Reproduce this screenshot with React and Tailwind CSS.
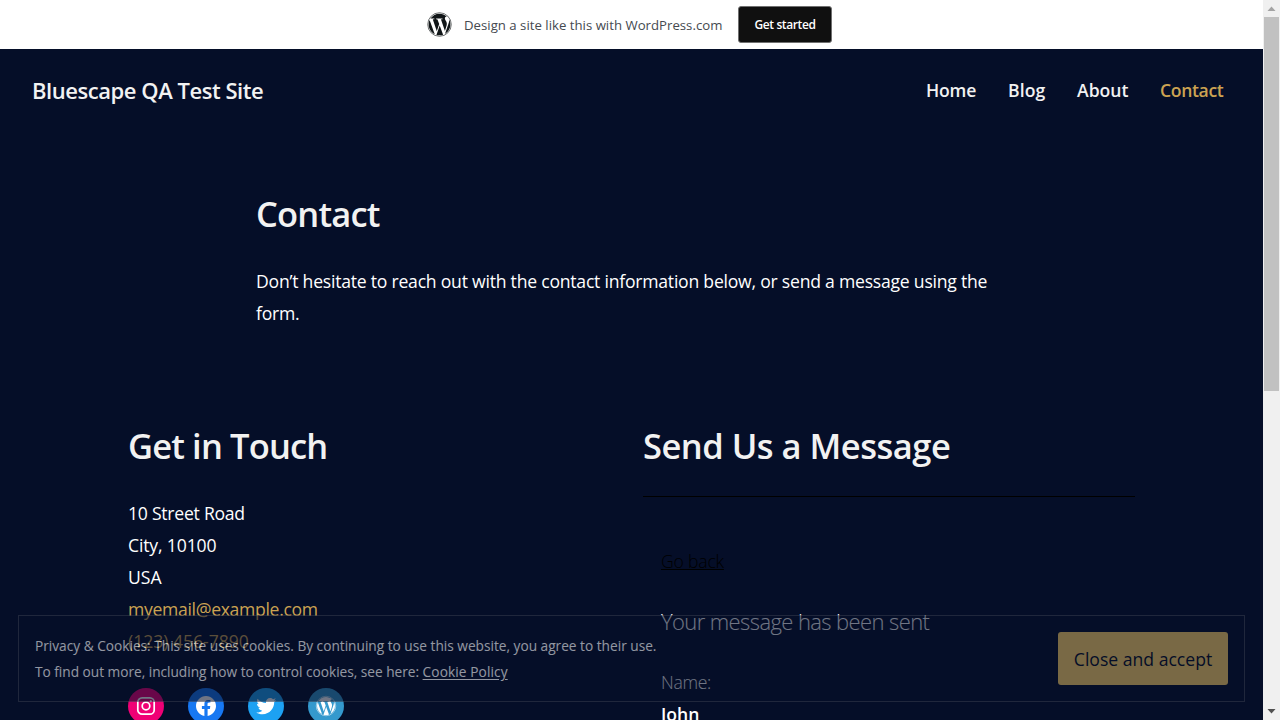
import React from "react";

function WordPressGlyph({ className }) {
  return (
    <svg viewBox="0 0 24 24" className={className} fill="currentColor">
      <path d="M12.158,12.786L9.46,20.625c0.806,0.237,1.657,0.366,2.54,0.366c1.047,0,2.051-0.181,2.986-0.51c-0.024-0.038-0.046-0.079-0.065-0.124L12.158,12.786z M3.009,12c0,3.559,2.068,6.634,5.067,8.092L3.788,8.341C3.289,9.459,3.009,10.696,3.009,12z M18.069,11.546c0-1.112-0.399-1.881-0.741-2.48c-0.456-0.741-0.883-1.368-0.883-2.109c0-0.826,0.627-1.596,1.51-1.596c0.04,0,0.078,0.005,0.116,0.007C16.472,3.904,14.34,3.009,12,3.009c-3.141,0-5.904,1.612-7.512,4.052c0.211,0.007,0.41,0.011,0.579,0.011c0.94,0,2.396-0.114,2.396-0.114C7.947,6.93,8.004,7.642,7.52,7.699c0,0-0.487,0.057-1.029,0.085l3.274,9.739l1.968-5.901l-1.401-3.838C9.848,7.756,9.389,7.699,9.389,7.699C8.904,7.67,8.961,6.93,9.446,6.958c0,0,1.484,0.114,2.368,0.114c0.94,0,2.397-0.114,2.397-0.114c0.485-0.028,0.542,0.684,0.057,0.741c0,0-0.488,0.057-1.029,0.085l3.249,9.665l0.897-2.996C17.841,13.284,18.069,12.316,18.069,11.546z M19.889,7.686c0.039,0.286,0.06,0.593,0.06,0.924c0,0.912-0.171,1.938-0.684,3.22l-2.746,7.94c2.673-1.558,4.47-4.454,4.47-7.771C20.991,10.436,20.591,8.967,19.889,7.686z" />
      <circle cx="12" cy="12" r="9.75" fill="none" stroke="currentColor" strokeWidth="0.5" />
    </svg>
  );
}

function InstagramGlyph({ className }) {
  return (
    <svg viewBox="0 0 24 24" className={className} fill="none" stroke="currentColor">
      <rect x="3.8" y="3.8" width="16.4" height="16.4" rx="4.3" strokeWidth="1.7" />
      <circle cx="12" cy="12" r="3.8" strokeWidth="1.7" />
      <circle cx="16.8" cy="7.2" r="1.1" fill="currentColor" stroke="none" />
    </svg>
  );
}

function FacebookGlyph({ className }) {
  return (
    <svg viewBox="0 0 24 24" className={className} fill="currentColor">
      <path d="M12 2C6.5 2 2 6.5 2 12c0 5 3.7 9.1 8.4 9.9v-7H7.9V12h2.5V9.8c0-2.5 1.5-3.9 3.8-3.9 1.1 0 2.2.2 2.2.2v2.5h-1.3c-1.2 0-1.6.8-1.6 1.6V12h2.8l-.4 2.9h-2.3v7C18.3 21.1 22 17 22 12c0-5.5-4.5-10-10-10z" />
    </svg>
  );
}

function TwitterGlyph({ className }) {
  return (
    <svg viewBox="0 0 24 24" className={className} fill="currentColor">
      <path d="M22.23,5.924c-0.736,0.326-1.527,0.547-2.357,0.646c0.847-0.508,1.498-1.312,1.804-2.27c-0.793,0.47-1.671,0.812-2.606,0.996C18.324,4.498,17.257,4,16.077,4c-2.266,0-4.103,1.837-4.103,4.103c0,0.322,0.036,0.635,0.106,0.935C8.67,8.867,5.647,7.234,3.623,4.751C3.27,5.357,3.067,6.062,3.067,6.814c0,1.424,0.724,2.679,1.825,3.415c-0.673-0.021-1.305-0.206-1.859-0.513c0,0.017,0,0.034,0,0.052c0,1.988,1.414,3.647,3.292,4.023c-0.344,0.094-0.707,0.144-1.081,0.144c-0.264,0-0.521-0.026-0.772-0.074c0.522,1.63,2.038,2.816,3.833,2.85c-1.404,1.1-3.174,1.756-5.096,1.756c-0.331,0-0.658-0.019-0.979-0.057c1.816,1.164,3.973,1.843,6.29,1.843c7.547,0,11.675-6.252,11.675-11.675c0-0.178-0.004-0.355-0.012-0.531C20.985,7.47,21.68,6.747,22.23,5.924z" />
    </svg>
  );
}

function MarketingBar() {
  return (
    <div className="flex h-[49px] items-center bg-white pl-[425px]">
      <WordPressGlyph className="size-[29px] shrink-0 text-[#101517]" />
      <span className="ml-[10px] mt-px w-[274px] whitespace-nowrap text-[13.2px] tracking-[0.01px] text-[#454a50]">
        Design a site like this with WordPress.com
      </span>
      <button className="mb-px h-[37px] w-[94px] rounded-[3px] border border-[#707070] bg-[#101010] text-[12px] font-semibold leading-none tracking-[-0.39px] text-white">
        <span className="relative top-px">Get started</span>
      </button>
    </div>
  );
}

function Header() {
  return (
    <header className="flex h-[83px] items-center justify-between pb-px pl-8 pr-[39px]">
      <a className="-mt-px whitespace-nowrap text-[22px] font-semibold tracking-[-0.45px] text-[#f2f2f2]">Bluescape QA Test Site</a>
      <nav className="-mt-px flex whitespace-nowrap text-[17.6px] font-semibold text-[#f2f2f2]">
        <a className="w-[82px] tracking-[-0.2px]">Home</a>
        <a className="w-[69px] tracking-[0.1px]">Blog</a>
        <a className="w-[83px]">About</a>
        <a className="w-[64px] tracking-[-0.35px] text-[#cca352]">Contact</a>
      </nav>
    </header>
  );
}

function Social({ color, children }) {
  return <a className={"flex size-9 items-center justify-center rounded-full text-white " + color}>{children}</a>;
}

function CookieBanner() {
  return (
    <div className="absolute left-[18px] top-[615px] flex h-[87px] w-[1227px] items-center justify-between border border-[#363b4c] bg-[#050e28] pl-4 pr-4 opacity-[0.57]">
      <p className="whitespace-nowrap text-[13.7px] leading-[26px] text-white">
        <span className="tracking-[-0.005px]">Privacy &amp; Cookies: This site uses cookies. By continuing to use this website, you agree to their use.</span>
        <br />
        <span className="tracking-[-0.02px]">To find out more, including how to control cookies, see here: </span>
        <a className="tracking-[0.1px] underline underline-offset-2">Cookie Policy</a>
      </p>
      <button className="h-[53px] w-[170px] rounded-[3px] bg-[#d2af5b] text-[17.6px] text-[#050e28]">Close and accept</button>
    </div>
  );
}

function Scrollbar() {
  return (
    <div className="flex h-full w-[17px] flex-col items-start bg-[#f0f0f0]">
      <svg viewBox="0 0 17 17" className="h-[17px] w-[17px]">
        <path d="M8.5 6.5l4 4.5h-8z" fill="#a3a3a3" />
      </svg>
      <div className="ml-px h-[374px] w-[15px] bg-[#c1c1c1]" />
      <svg viewBox="0 0 17 17" className="mt-auto h-[17px] w-[17px]">
        <path d="M8.5 10.5l4-4.5h-8z" fill="#505050" />
      </svg>
    </div>
  );
}

export default function App() {
  return (
    <div className="relative flex h-[720px] w-[1280px] overflow-hidden bg-[#050e28] font-['Open_Sans',sans-serif] text-[17.6px] leading-8 text-white">
      <div className="h-[720px] w-[1263px] overflow-hidden">
        <MarketingBar />
        <Header />
        <section className="h-[288px] pl-64 pt-[52px]">
          <h1 className="text-[34.5px] font-semibold leading-[60px] tracking-[-0.8px] text-[#f2f2f2]">Contact</h1>
          <p className="mt-[21px] w-[752px] tracking-[-0.23px]">
            Don’t hesitate to reach out with the contact information below, or send a message using the
            <br />
            form.
          </p>
        </section>
        <div className="flex pl-32">
          <section className="w-[515px]">
            <h2 className="text-[34.5px] font-semibold leading-[52px] tracking-[-0.85px] text-[#f2f2f2]">Get in Touch</h2>
            <div className="mt-[25px]">
              <p className="tracking-[-0.25px]">10 Street Road</p>
              <p className="tracking-[-0.15px]">City, 10100</p>
              <p>USA</p>
              <p className="tracking-[-0.32px] text-[#cca352]">myemail@example.com</p>
              <p className="tracking-[-0.03px] text-[#cca352]">(123) 456-7890</p>
            </div>
            <div className="mt-[31px] flex gap-6 pl-[0.4px]">
              <Social color="bg-[#f00075]"><InstagramGlyph className="size-6" /></Social>
              <Social color="bg-[#1778f2]"><FacebookGlyph className="size-6" /></Social>
              <Social color="bg-[#1da1f2]"><TwitterGlyph className="size-6" /></Social>
              <Social color="bg-[#3499cd]"><WordPressGlyph className="size-6" /></Social>
            </div>
          </section>
          <section className="w-[492px]">
            <h2 className="whitespace-nowrap text-[34.5px] font-semibold leading-[52px] tracking-[-0.5px] text-[#f2f2f2]">Send Us a Message</h2>
            <div className="mt-6 border-t border-black pl-[18px] pt-12">
              <a className="block font-light text-black underline tracking-[-0.2px]">Go back</a>
              <h4 className="mt-6 text-[22px] font-light leading-[40px] tracking-[-0.6px]">Your message has been sent</h4>
              <p className="mt-[25px] font-light tracking-[-0.3px]">Name:</p>
              <p className="font-semibold">John</p>
            </div>
          </section>
        </div>
      </div>
      <Scrollbar />
      <CookieBanner />
    </div>
  );
}
